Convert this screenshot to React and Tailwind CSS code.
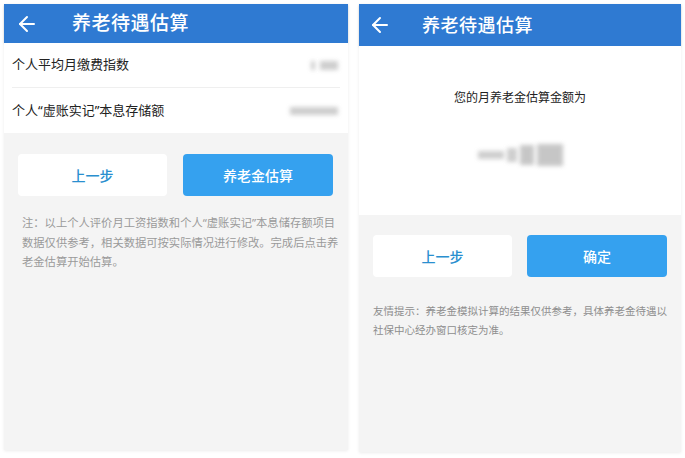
import React from 'react';
import { ArrowLeft } from 'lucide-react';

const font = { fontFamily: '"Noto Sans", "Noto Sans CJK SC", sans-serif' };

const Header = ({ h, titleSize, arrowX, titleX }) => (
    <div className={`bg-[#2f7ad2] flex items-center text-white shadow-[0_1px_2px_rgba(0,0,0,0.15)] ${h}`}>
        <ArrowLeft className={`w-[24px] h-[24px] ${arrowX}`} strokeWidth={2} />
        <span className={`${titleX} ${titleSize} font-medium tracking-[0.5px]`}>养老待遇估算</span>
    </div>
);

const Blur = ({ className }) => (
    <div className={`bg-[#b9b9b9] blur-[2px] opacity-70 ${className}`}></div>
);

const App = () => (
    <div className="w-[685px] h-[458px] bg-white flex items-start gap-[11px] pl-[4px] pt-[4px]" style={font}>
        {/* left screen */}
        <div className="w-[344px] h-[446px] flex flex-col bg-[#f4f4f4] shadow-[0_1px_3px_rgba(0,0,0,0.08)]">
            <Header h="h-[39px]" titleSize="text-[19px]" arrowX="ml-[11px]" titleX="ml-[33px]" />
            <div className="bg-white px-[8px]">
                <div className="h-[45px] flex items-center justify-between border-b border-[#efefef]">
                    <span className="text-[13px] text-[#222]">个人平均月缴费指数</span>
                    <div className="flex items-center gap-[5px] mr-[2px]">
                        <Blur className="w-[4px] h-[9px]" />
                        <Blur className="w-[18px] h-[9px]" />
                    </div>
                </div>
                <div className="h-[45px] flex items-center justify-between">
                    <span className="text-[13px] text-[#222]">个人“虚账实记”本息存储额</span>
                    <Blur className="w-[48px] h-[8px] mr-[2px] opacity-50" />
                </div>
            </div>
            <div className="px-[14px] pt-[21px]">
                <div className="flex gap-[16px]">
                    <button className="w-[149px] h-[42px] rounded-[4px] bg-white text-[#2a8fcf] text-[14px] font-medium">上一步</button>
                    <button className="w-[150px] h-[42px] rounded-[4px] bg-[#35a1ef] text-white text-[14px] font-medium">养老金估算</button>
                </div>
                <p className="mt-[17px] -mr-[6px] text-[11.3px] leading-[19.5px] text-[#9a9a9a] pl-[4px]">
                    注：以上个人评价月工资指数和个人“虚账实记”本息储存额项目数据仅供参考，相关数据可按实际情况进行修改。完成后点击养老金估算开始估算。
                </p>
            </div>
        </div>

        {/* right screen */}
        <div className="w-[322px] h-[448px] flex flex-col bg-[#f4f4f4] shadow-[0_1px_3px_rgba(0,0,0,0.08)]">
            <Header h="h-[42px]" titleSize="text-[18px]" arrowX="ml-[9px]" titleX="ml-[30px]" />
            <div className="bg-white h-[169px] flex flex-col items-center">
                <span className="mt-[43px] text-[12px] text-[#222]">您的月养老金估算金额为</span>
                <div className="mt-[35px] flex items-center gap-[3px] h-[26px]">
                    <Blur className="w-[26px] h-[8px]" />
                    <Blur className="w-[10px] h-[14px]" />
                    <Blur className="w-[14px] h-[20px] opacity-80" />
                    <Blur className="w-[26px] h-[22px] opacity-80" />
                </div>
            </div>
            <div className="px-[14px] pt-[20px]">
                <div className="flex gap-[15px]">
                    <button className="w-[139px] h-[42px] rounded-[4px] bg-white text-[#2a8fcf] text-[14px] font-medium">上一步</button>
                    <button className="w-[140px] h-[42px] rounded-[4px] bg-[#35a1ef] text-white text-[14px] font-medium">确定</button>
                </div>
                <p className="mt-[25px] text-[10.5px] leading-[19px] text-[#8e8e8e]">
                    友情提示：养老金模拟计算的结果仅供参考，具体养老金待遇以社保中心经办窗口核定为准。
                </p>
            </div>
        </div>
    </div>
);

export default App;
